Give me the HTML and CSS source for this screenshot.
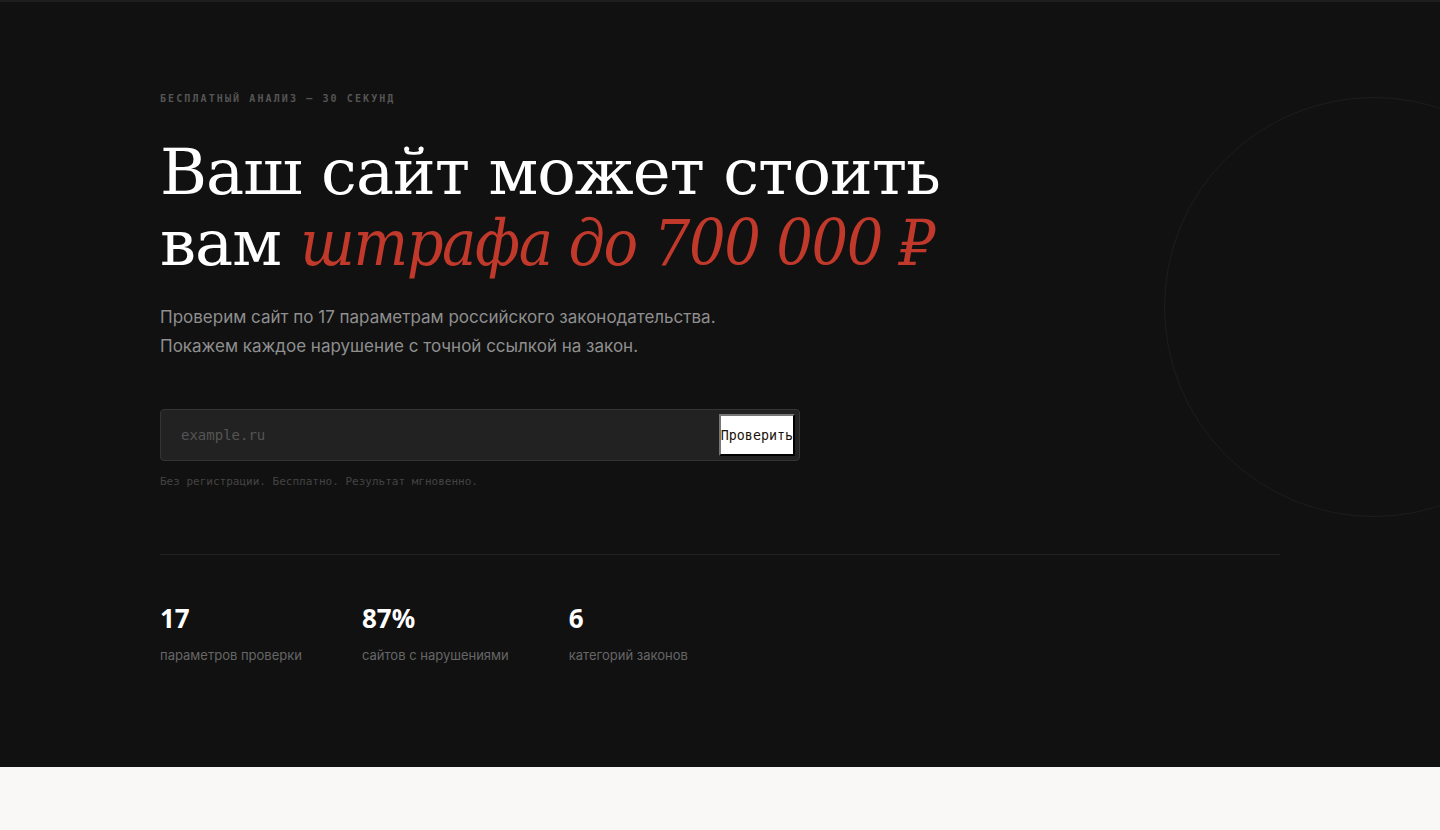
FILE: index.html
```html
<!DOCTYPE html>
<html lang="ru">
<head>
<meta charset="utf-8">
<title>Проверка сайта</title>
<link rel="stylesheet" href="styles.css">
</head>
<body>
<section class="hero">
  <div class="circle"></div>
  <div class="container">
    <div class="eyebrow">БЕСПЛАТНЫЙ АНАЛИЗ — 30 СЕКУНД</div>
    <h1 class="title">Ваш сайт может стоить<br>вам <em>штрафа до 700 000 ₽</em></h1>
    <p class="lead">Проверим сайт по 17 параметрам российского законодательства.<br>Покажем каждое нарушение с точной ссылкой на закон.</p>
    <form class="check">
      <input class="check-input" type="text" placeholder="example.ru">
      <button class="check-btn" type="button">Проверить</button>
    </form>
    <div class="note">Без регистрации. Бесплатно. Результат мгновенно.</div>
    <div class="divider"></div>
    <div class="stats">
      <div class="stat"><div class="stat-num">17</div><div class="stat-label">параметров проверки</div></div>
      <div class="stat"><div class="stat-num">87%</div><div class="stat-label">сайтов с нарушениями</div></div>
      <div class="stat"><div class="stat-num">6</div><div class="stat-label">категорий законов</div></div>
    </div>
  </div>
</section>
<section class="light"></section>
</body>
</html>
```
FILE: styles.css
```css
* { box-sizing: border-box; }
html, body { margin: 0; padding: 0; }
body { background: #f9f8f6; font-family: "Inter", "Liberation Sans", sans-serif; }

.hero {
  position: relative;
  overflow: hidden;
  background: #111111;
  border-top: 2px solid #1e1e1e;
  height: 767px;
}
.circle {
  position: absolute;
  left: 1164px;
  top: 95px;
  width: 420px;
  height: 420px;
  border-radius: 50%;
  border: 1px solid #1d1d1d;
}
.container {
  position: relative;
  width: 1120px;
  margin: 0 auto;
  padding-top: 90px;
}
.eyebrow {
  font-family: "DejaVu Sans Mono", monospace;
  font-weight: bold;
  font-size: 10px;
  letter-spacing: 2.1px;
  color: #555555;
  line-height: 14px;
}
.title {
  margin: 31px 0 0;
  font-family: "DejaVu Serif", serif;
  font-weight: normal;
  font-size: 64px;
  line-height: 71px;
  color: #ffffff;
  letter-spacing: -1px;
}
.title em {
  font-family: "DejaVu Serif Condensed", "DejaVu Serif", serif;
  font-stretch: condensed;
  font-style: italic;
  font-size: 64px;
  letter-spacing: -1.4px;
  color: #c0392b;
}
.lead {
  margin: 24px 0 0;
  font-size: 17px;
  line-height: 29px;
  color: #8f8f8f;
}
.check {
  margin-top: 48px;
  width: 640px;
  height: 52px;
  display: flex;
  align-items: center;
  background: #222222;
  border: 1px solid #353535;
  border-radius: 4px;
  padding: 0 4px 0 20px;
}
.check-input {
  flex: 1;
  min-width: 0;
  padding: 0;
  background: transparent;
  border: none;
  outline: none;
  font-family: "DejaVu Sans Mono", monospace;
  font-size: 14px;
  color: #dddddd;
}
.check-input::placeholder { color: #555555; }
.check-btn {
  height: 42px;
  background: #ffffff;
  color: #1a1208;
  border: 2px outset #767676;
  border-right-color: #000;
  border-bottom-color: #000;
  padding: 0;
  font-family: "DejaVu Sans Mono", monospace;
  font-size: 13.333px;
}
.note {
  margin-top: 14px;
  font-family: "DejaVu Sans Mono", monospace;
  font-size: 11px;
  color: #444444;
}
.divider {
  margin-top: 66px;
  height: 1px;
  background: #222222;
}
.stats {
  display: flex;
  gap: 60px;
  padding-top: 46px;
}
.stat-num {
  font-family: "Noto Sans", "DejaVu Sans", sans-serif;
  font-weight: bold;
  font-size: 26px;
  line-height: 34px;
  color: #ffffff;
}
.stat-label {
  margin-top: 12px;
  font-size: 13px;
  color: #666666;
}
.light { height: 63px; background: #f9f8f6; }
```
